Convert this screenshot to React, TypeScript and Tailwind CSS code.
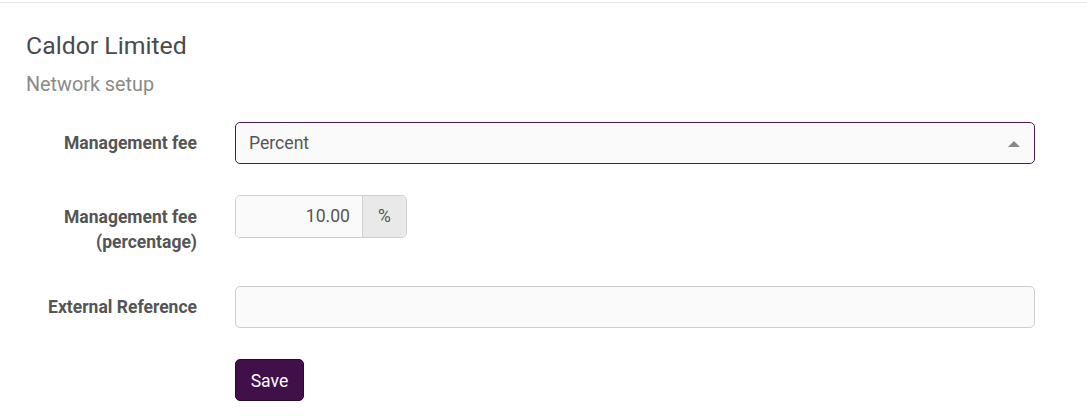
export default function App() {
  return (
    <div className="min-h-[418px] bg-white" style={{ fontFamily: "Roboto, 'Liberation Sans', sans-serif" }}>
      <div className="pt-[2px]">
        <div className="border-t border-[#e6e6e6]" />
      </div>
      <div className="pl-[26px] pt-[29px]">
        <h1 className="text-[24.8px] leading-[28px] text-[#4a4a4a]">Caldor Limited</h1>
        <h2 className="mt-[13px] text-[19.8px] leading-[24px] text-[#8a8a8a]">Network setup</h2>
      </div>

      <form className="mt-[25px] flex flex-col" onSubmit={(e) => e.preventDefault()}>
        <div className="flex items-start">
          <label className="w-[197px] pt-[9px] text-right text-[17.5px] leading-[25px] font-bold text-[#555]">
            Management fee
          </label>
          <div className="ml-[38px] relative w-[800px] h-[42px] rounded-[5px] border border-[#4a1a50] bg-[#fbfafb] flex items-center px-[13px]">
            <span className="text-[17.6px] text-[#555]">Percent</span>
            <span className="absolute right-[14px] top-[18px] w-0 h-0 border-l-[6px] border-r-[6px] border-b-[6px] border-l-transparent border-r-transparent border-b-[#888]" />
          </div>
        </div>

        <div className="mt-[31px] flex items-start">
          <label className="w-[197px] pt-[10px] text-right text-[17.5px] leading-[25px] font-bold text-[#555]">
            Management fee
            <br />
            (percentage)
          </label>
          <div className="ml-[38px] flex h-[43px] w-[172px] rounded-[5px] border border-[#cfcfcf] overflow-hidden">
            <div className="flex-1 bg-[#fafafa] flex items-center justify-end pr-[12px] text-[17.6px] text-[#555]">10.00</div>
            <div className="w-[44px] border-l border-[#cfcfcf] bg-[#e9e9e9] flex items-center justify-center text-[17.6px] text-[#555]">%</div>
          </div>
        </div>

        <div className="mt-[31px] flex items-start">
          <label className="w-[197px] pt-[9px] text-right text-[17.5px] leading-[25px] font-bold text-[#555]">
            External Reference
          </label>
          <div className="ml-[38px] w-[800px] h-[42px] rounded-[5px] border border-[#cfcfcf] bg-[#fafafa]" />
        </div>

        <div className="mt-[31px] pl-[235px]">
          <button className="h-[42px] w-[69px] rounded-[5px] border border-[#2a0830] bg-[#41104b] pt-[3px] text-[17.6px] text-white">
            Save
          </button>
        </div>
      </form>
    </div>
  );
}
